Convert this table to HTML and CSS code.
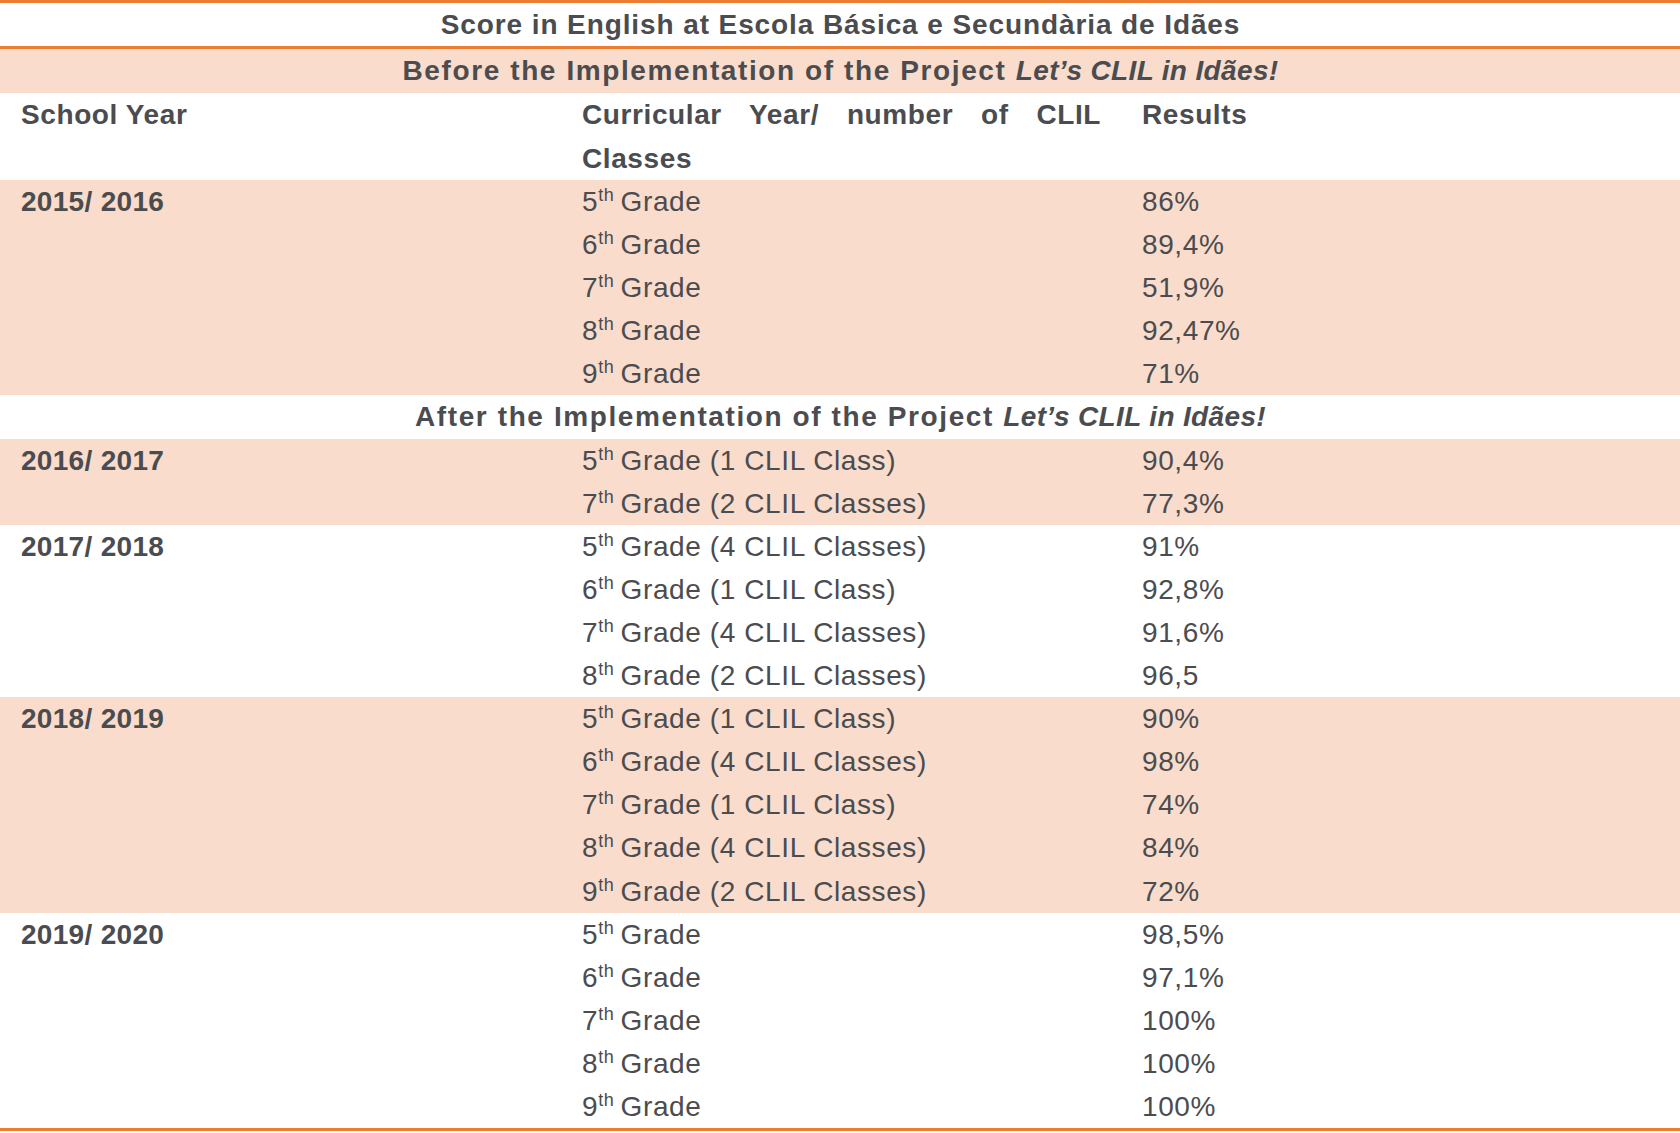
FILE: index.html
```html
<!DOCTYPE html>
<html lang="en">
<head>
<meta charset="utf-8">
<title>Score in English at Escola Básica e Secundària de Idães</title>
<link rel="stylesheet" href="styles.css">
</head>
<body>
<table class="scores">
  <colgroup>
    <col class="c1"><col class="c2"><col class="c3">
  </colgroup>
  <thead>
    <tr class="title-row"><th colspan="3">Score in English at Escola Básica e Secundària de Idães</th></tr>
  </thead>
  <tbody>
    <tr class="section band"><th colspan="3">Before the Implementation of the Project <em>Let’s CLIL in Idães!</em></th></tr>
    <tr class="head-row">
      <th>School Year</th>
      <th class="justify">Curricular Year/ number of CLIL Classes</th>
      <th>Results</th>
    </tr>
  </tbody>
  <tbody class="band">
    <tr><td class="year">2015/ 2016</td><td>5<sup>th</sup> Grade</td><td>86%</td></tr>
    <tr><td></td><td>6<sup>th</sup> Grade</td><td>89,4%</td></tr>
    <tr><td></td><td>7<sup>th</sup> Grade</td><td>51,9%</td></tr>
    <tr><td></td><td>8<sup>th</sup> Grade</td><td>92,47%</td></tr>
    <tr><td></td><td>9<sup>th</sup> Grade</td><td>71%</td></tr>
  </tbody>
  <tbody>
    <tr class="section"><th colspan="3">After the Implementation of the Project <em>Let’s CLIL in Idães!</em></th></tr>
  </tbody>
  <tbody class="band">
    <tr><td class="year">2016/ 2017</td><td>5<sup>th</sup> Grade (1 CLIL Class)</td><td>90,4%</td></tr>
    <tr><td></td><td>7<sup>th</sup> Grade (2 CLIL Classes)</td><td>77,3%</td></tr>
  </tbody>
  <tbody>
    <tr><td class="year">2017/ 2018</td><td>5<sup>th</sup> Grade (4 CLIL Classes)</td><td>91%</td></tr>
    <tr><td></td><td>6<sup>th</sup> Grade (1 CLIL Class)</td><td>92,8%</td></tr>
    <tr><td></td><td>7<sup>th</sup> Grade (4 CLIL Classes)</td><td>91,6%</td></tr>
    <tr><td></td><td>8<sup>th</sup> Grade (2 CLIL Classes)</td><td>96,5</td></tr>
  </tbody>
  <tbody class="band">
    <tr><td class="year">2018/ 2019</td><td>5<sup>th</sup> Grade (1 CLIL Class)</td><td>90%</td></tr>
    <tr><td></td><td>6<sup>th</sup> Grade (4 CLIL Classes)</td><td>98%</td></tr>
    <tr><td></td><td>7<sup>th</sup> Grade (1 CLIL Class)</td><td>74%</td></tr>
    <tr><td></td><td>8<sup>th</sup> Grade (4 CLIL Classes)</td><td>84%</td></tr>
    <tr><td></td><td>9<sup>th</sup> Grade (2 CLIL Classes)</td><td>72%</td></tr>
  </tbody>
  <tbody class="last">
    <tr><td class="year">2019/ 2020</td><td>5<sup>th</sup> Grade</td><td>98,5%</td></tr>
    <tr><td></td><td>6<sup>th</sup> Grade</td><td>97,1%</td></tr>
    <tr><td></td><td>7<sup>th</sup> Grade</td><td>100%</td></tr>
    <tr><td></td><td>8<sup>th</sup> Grade</td><td>100%</td></tr>
    <tr><td></td><td>9<sup>th</sup> Grade</td><td>100%</td></tr>
  </tbody>
</table>
</body>
</html>
```

FILE: styles.css
```css
html, body {
  margin: 0;
  padding: 0;
  background: #ffffff;
}

.scores {
  width: 1680px;
  border-collapse: collapse;
  table-layout: fixed;
  font-family: "Liberation Sans", Arial, sans-serif;
  font-size: 28px;
  color: #4b4c50;
  border-top: 3px solid #ed7d31;
  border-bottom: 3px solid #ed7d31;
}

.c1 { width: 561px; }
.c2 { width: 560px; }
.c3 { width: 559px; }

.scores td,
.scores th {
  padding: 0 20px 0 21px;
  height: 43.1px;
  line-height: 43.1px;
  vertical-align: top;
  text-align: left;
  letter-spacing: 0.6px;
  white-space: nowrap;
}

.scores th {
  font-weight: bold;
}

.title-row th {
  text-align: center;
  height: 43px;
  line-height: 43px;
  border-bottom: 3px solid #ed7d31;
  letter-spacing: 0.9px;
}

.section th {
  text-align: center;
  letter-spacing: 1.6px;
}

.section.band th {
  height: 44px;
  line-height: 44px;
}

.section em {
  font-style: italic;
  letter-spacing: 0.35px;
}

.head-row th {
  height: 87px;
  line-height: 43.5px;
}

.head-row th.justify {
  white-space: normal;
  text-align: justify;
  padding-right: 20px;
}

.band {
  background: #f9dccb;
}

.scores td.year {
  font-weight: bold;
  letter-spacing: 0.3px;
}

sup {
  font-size: 18px;
  line-height: 0;
  vertical-align: 10px;
  letter-spacing: 0.5px;
  margin-right: -2px;
}
```
